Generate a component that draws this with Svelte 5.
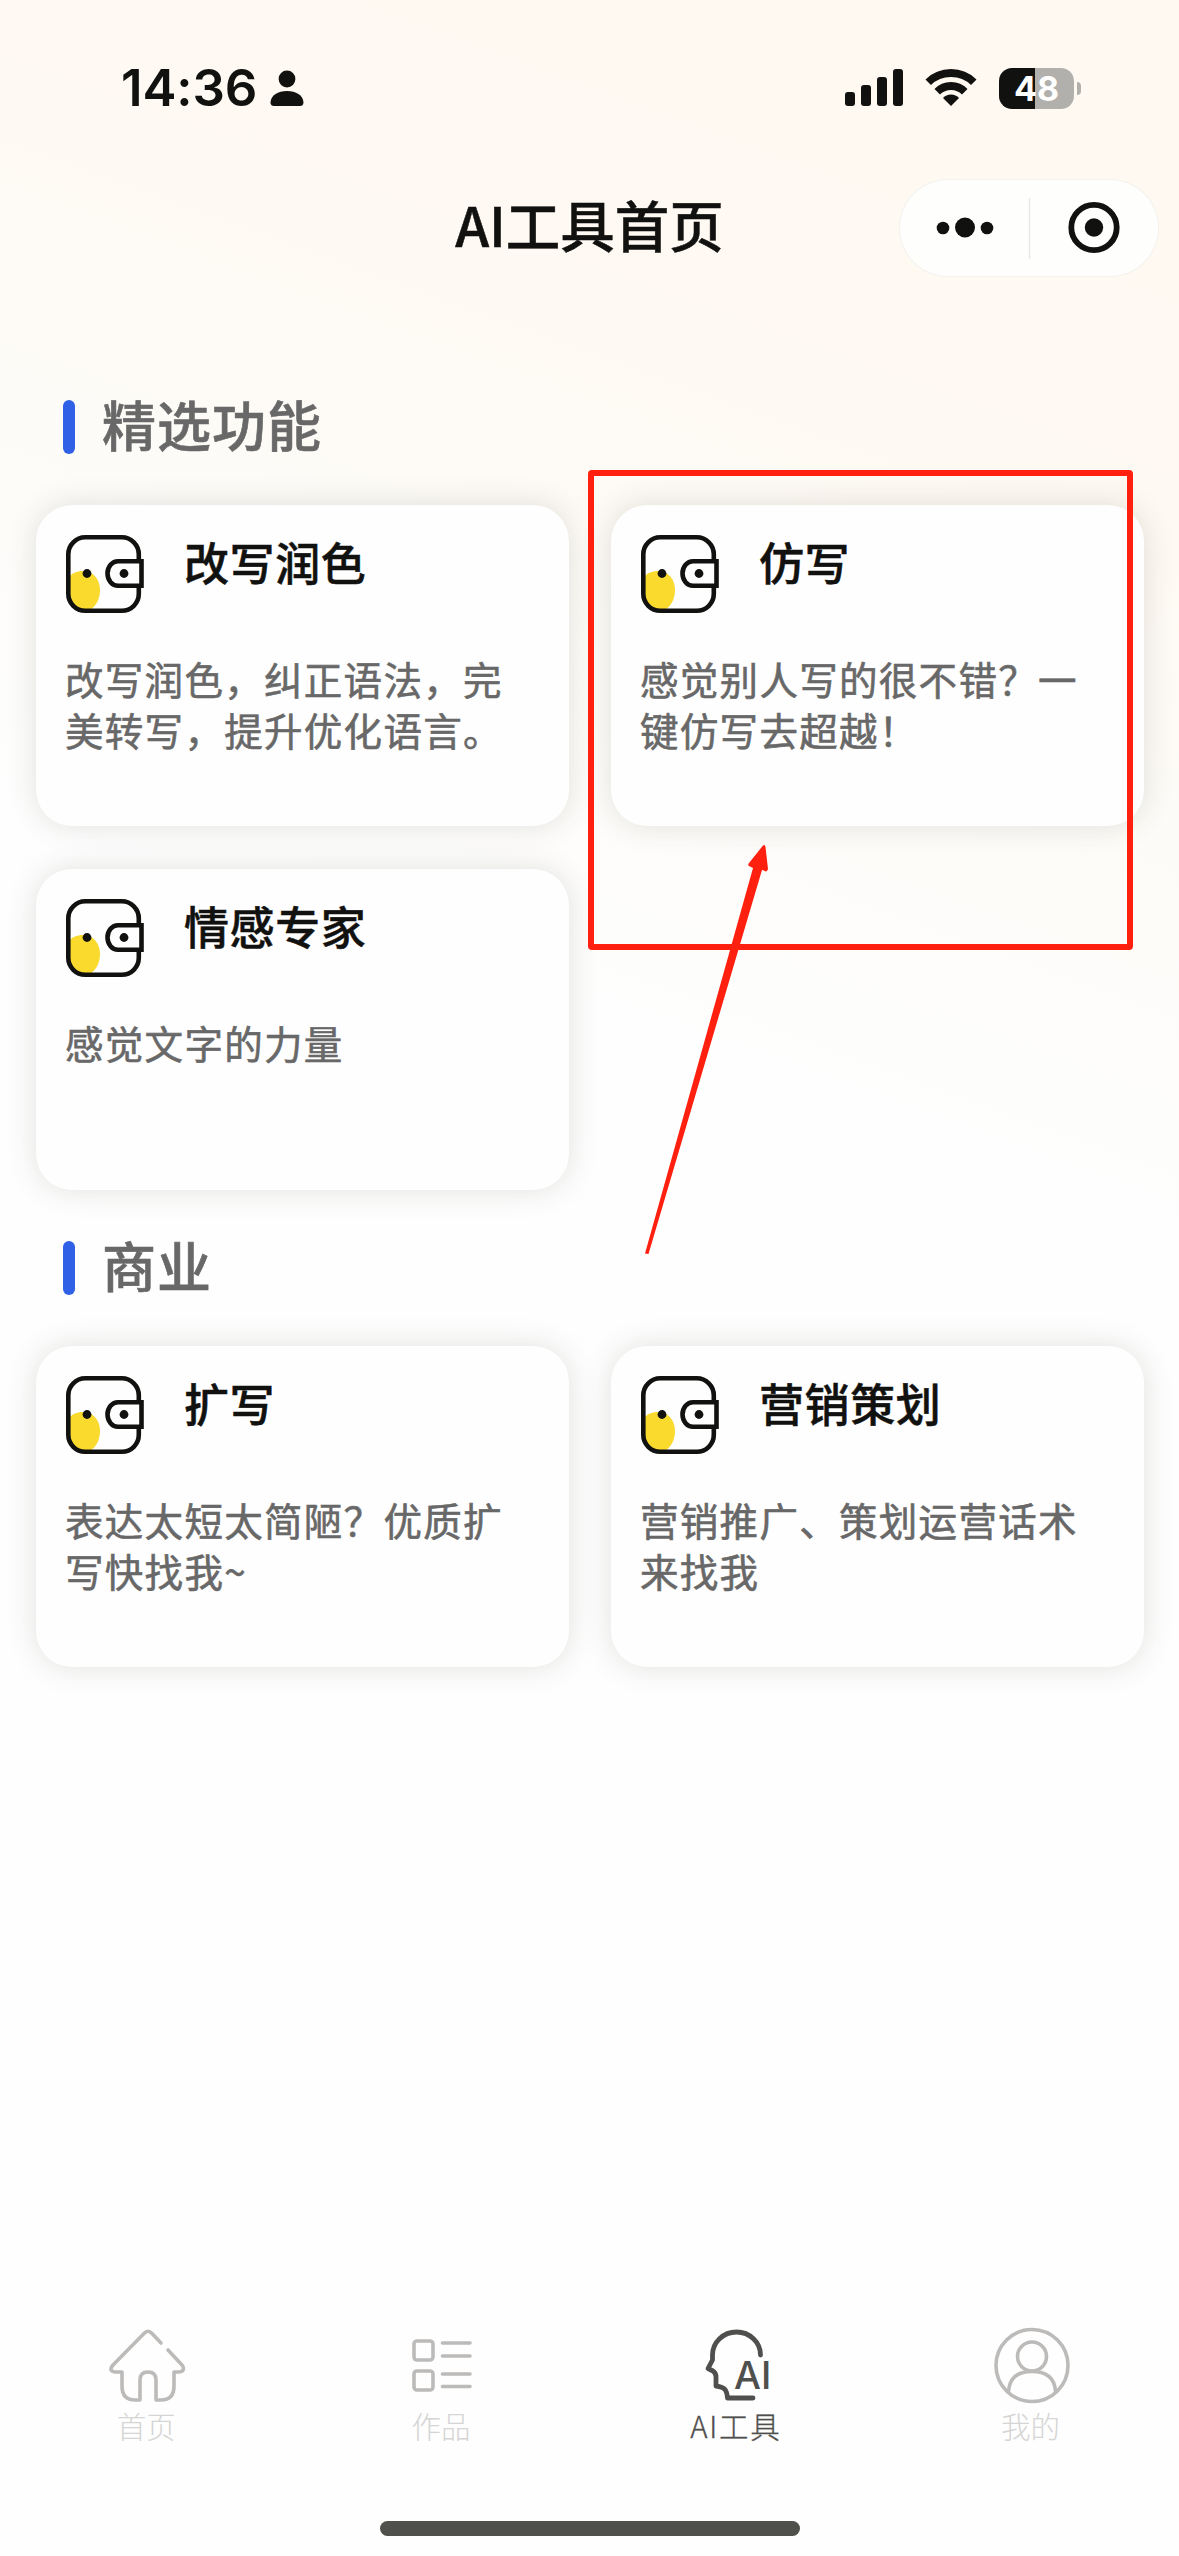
<script lang="ts">
  type Card = { title: string; lines: string[] };
  type Section = { name: string; cards: Card[] };

  const sections: Section[] = [
    {
      name: '精选功能',
      cards: [
        { title: '改写润色', lines: ['改写润色，纠正语法，完', '美转写，提升优化语言。'] },
        { title: '仿写', lines: ['感觉别人写的很不错？一', '键仿写去超越！'] },
        { title: '情感专家', lines: ['感觉文字的力量'] }
      ]
    },
    {
      name: '商业',
      cards: [
        { title: '扩写', lines: ['表达太短太简陋？优质扩', '写快找我~'] },
        { title: '营销策划', lines: ['营销推广、策划运营话术', '来找我'] }
      ]
    }
  ];

  const tabs = [
    { id: 'home', label: '首页' },
    { id: 'works', label: '作品' },
    { id: 'ai', label: 'AI工具' },
    { id: 'me', label: '我的' }
  ];
  const active = 'ai';
</script>

<div class="page">
  <header class="status">
    <div class="clock">
      <span class="time">14:36</span>
      <svg class="person" width="34" height="37" viewBox="0 0 34 37">
        <circle cx="17" cy="9" r="8.4" />
        <path d="M0.5 32.500C1 25 8 21 17 21s16 4 16.500 11.500Q33.300 36 30 36H4Q0.700 36 0.500 32.500Z" />
      </svg>
    </div>
    <div class="indicators">
      <svg width="58" height="38" viewBox="0 0 58 38">
        <rect x="0" y="23" width="10" height="14" rx="3" />
        <rect x="16" y="16" width="10" height="21" rx="3" />
        <rect x="32" y="8" width="10" height="29" rx="3" />
        <rect x="48" y="0" width="10" height="37" rx="3" />
      </svg>
      <svg class="wifi" width="52" height="38" viewBox="0 0 52 38">
        <path d="M0.500 10.500Q11 0 26 0T51.500 10.500L46 16Q38 8 26 8T6 16Z" />
        <path d="M9.500 20Q16 13 26 13T42.500 20L37 25.500Q32.500 21 26 21T15 25.500Z" />
        <path d="M18 29Q21 25.500 26 25.500T34 29L26 37Z" />
      </svg>
      <div class="battery"><span>48</span></div>
      <i class="cap"></i>
    </div>
  </header>

  <nav class="titlebar">
    <h1>AI工具首页</h1>
    <div class="capsule">
      <svg width="258" height="96" viewBox="0 0 258 96">
        <circle cx="43" cy="48" r="6.300" />
        <circle cx="65" cy="47.500" r="10" />
        <circle cx="87" cy="48" r="6.300" />
        <path class="divider" d="M129.500 18V79" />
        <circle class="ring" cx="194" cy="47.500" r="22.700" />
        <circle cx="194" cy="47.500" r="9.200" />
      </svg>
    </div>
  </nav>

  <main>
    {#each sections as section}
      <section>
        <h2><span>{section.name}</span></h2>
        <div class="grid">
          {#each section.cards as card}
            <article>
              <div class="head">
                <svg class="wallet" width="80" height="80" viewBox="0 0 80 80">
                  <path class="yolk" d="M3 45C6 39 12 37 18 37C28 37 35 45 35 56C35 65 31 72 25 76H17Q4 73 3 59Z" />
                  <rect class="line" x="3.300" y="3.300" width="70.500" height="73.500" rx="17" />
                  <path class="flap" d="M76.500 27.300H53A10.500 12.200 0 0 0 53 51.700H76.500Z" />
                  <circle cx="22" cy="39.500" r="4.400" />
                  <circle cx="59" cy="39.500" r="4.400" />
                </svg>
                <h3>{card.title}</h3>
              </div>
              <p>{#each card.lines as line}<span>{line}</span>{/each}</p>
            </article>
          {/each}
        </div>
      </section>
    {/each}
  </main>

  <footer>
    <div class="tabs">
      {#each tabs as tab}
        <div class="tab" class:active={tab.id === active}>
          <svg width="80" height="80" viewBox="0 0 80 80">
            {#if tab.id === 'home'}
              <path d="M54 17L45 7.500Q41 3 37 7.500L6 39Q1 45 8 46H15V60Q15 74 28 74H33V54Q33 46 41 46T49 54V74H54Q67 74 67 60V46H72Q79 45 75 39L61 24" />
            {:else if tab.id === 'works'}
              <rect x="12" y="15" width="19" height="19" rx="3" />
              <rect x="12" y="45" width="19" height="19" rx="3" />
              <path d="M40.500 17H68M40.500 30H68M40.500 48H68M40.500 60.500H68" />
            {:else if tab.id === 'ai'}
              <path d="M63.500 29A24 23 0 0 0 15.500 29V34L11 42.500L16 45Q19 47 19 51V60Q26 61 28 63.500T30.500 72H56" />
              <text x="37 64" y="62.500">AI</text>
            {:else}
              <circle cx="40" cy="39.500" r="36" />
              <circle cx="40" cy="30.500" r="14.500" />
              <path d="M16.500 65Q18 45.500 40 45.500T63.500 65" />
            {/if}
          </svg>
          <span>{tab.label}</span>
        </div>
      {/each}
    </div>
    <div class="home-bar"></div>
  </footer>

  <svg class="annotation" width="1179" height="2556" viewBox="0 0 1179 2556">
    <rect x="591" y="473" width="539" height="474" rx="1" />
    <path d="M645 1253.500L753 868L749 866Q747.500 865 749 863L763 845.500Q765 844 765.500 847L768 869Q767 873 764 870.500L762 870L648.500 1254Z" />
  </svg>
</div>

<style>
  :global(body) {
    margin: 0;
  }
  .page {
    position: relative;
    box-sizing: border-box;
    width: 1179px;
    height: 2556px;
    overflow: hidden;
    display: flex;
    flex-direction: column;
    color: #111110;
    background: linear-gradient(200deg, #fff9f1 0%, #fef9f2 17%, #fdfcf9 30%, #fefefe 42%, #fefefe 100%);
    font-family: Inter, 'Noto Sans CJK SC', sans-serif;
  }
  svg {
    display: block;
    flex: none;
    fill: #111110;
  }
  h1, h2, h3, p {
    margin: 0;
  }
  .status {
    height: 176px;
    padding: 0 98px 0 121px;
    box-sizing: border-box;
    display: flex;
    justify-content: space-between;
    align-items: center;
  }
  .clock, .indicators {
    display: flex;
    align-items: center;
  }
  .time {
    font-size: 51px;
    font-weight: 600;
    line-height: 60px;
    width: 149px;
    letter-spacing: -0.1px;
    white-space: nowrap;
  }
  .wifi {
    margin: 0 22px;
  }
  .battery {
    width: 75px;
    height: 41px;
    border-radius: 13px;
    background: linear-gradient(90deg, #111110 48%, #b1b0ad 48%);
    color: #fff;
    font: 700 34px/41px Inter, sans-serif;
    text-align: center;
  }
  .cap {
    width: 4px;
    height: 13px;
    margin-left: 3px;
    border-radius: 0 4px 4px 0;
    background: #b1b0ad;
  }
  .titlebar {
    height: 104px;
    display: grid;
    grid-template-columns: 1fr auto 1fr;
    align-items: center;
  }
  h1 {
    grid-column: 2;
    padding-bottom: 9px;
    font: 500 54.5px/80px 'Noto Sans CJK SC', sans-serif;
    -webkit-text-stroke: 0.5px currentColor;
  }
  .capsule {
    justify-self: end;
    margin-right: 21px;
    width: 258px;
    height: 96px;
    border-radius: 48px;
    background: #fefefd;
    box-shadow: 0 0 0 1px #f3f2ed;
  }
  .divider {
    stroke: #ebe9e4;
    stroke-width: 1.5;
  }
  .ring {
    fill: none;
    stroke: #111110;
    stroke-width: 5.8;
  }
  main {
    flex: 1;
    padding: 120px 36px 0;
  }
  section + section {
    margin-top: 51px;
  }
  h2 {
    display: flex;
    align-items: center;
    height: 54px;
    margin: 0 0 51px 27px;
    color: #686868;
    font: 500 54px/54px 'Noto Sans CJK SC', sans-serif;
    letter-spacing: 1px;
    -webkit-text-stroke: 0.6px currentColor;
  }
  h2::before {
    content: '';
    width: 12px;
    height: 54px;
    margin-right: 27px;
    border-radius: 6px;
    background: #2f60e5;
  }
  h2 span {
    padding-bottom: 6px;
  }
  .grid {
    display: grid;
    grid-template-columns: 533px 533px;
    grid-auto-rows: 321px;
    column-gap: 42px;
    row-gap: 43px;
  }
  article {
    box-sizing: border-box;
    padding: 29px 29px 0;
    border-radius: 36px;
    background: #fefefe;
    box-shadow: 0 0 30px rgba(60, 60, 50, 0.15);
  }
  .head {
    display: flex;
    gap: 39px;
    height: 80px;
  }
  .wallet .yolk {
    fill: #f9da2d;
  }
  .wallet .line, .wallet .flap {
    fill: none;
    stroke: #111110;
    stroke-width: 4.6;
  }
  .wallet .flap {
    fill: #fefefe;
  }
  h3 {
    font: 500 45px/56px 'Noto Sans CJK SC', sans-serif;
    letter-spacing: 0.6px;
    -webkit-text-stroke: 0.5px currentColor;
  }
  p {
    padding-top: 39px;
    color: #686868;
    font: 400 38.500px/51px 'Noto Sans CJK SC', sans-serif;
    letter-spacing: 1.3px;
    -webkit-text-stroke: 0.6px currentColor;
  }
  p span {
    display: block;
    white-space: nowrap;
  }
  footer {
    height: 230px;
    display: flex;
    flex-direction: column;
    align-items: center;
  }
  .tabs {
    width: 100%;
    height: 195px;
    display: grid;
    grid-template-columns: repeat(4, 1fr);
  }
  .tab {
    display: flex;
    flex-direction: column;
    align-items: center;
    color: #d5d5d4;
    font: 300 29.500px/40px 'Noto Sans CJK SC', sans-serif;
  }
  .tab span {
    margin-top: -1px;
    padding-right: 2px;
  }
  .tab svg {
    fill: none;
    stroke: #bcbbb9;
    stroke-width: 3.6;
    stroke-linecap: round;
    stroke-linejoin: round;
  }
  .tab.active {
    color: #4f4f4d;
    letter-spacing: 1.7px;
    -webkit-text-stroke: 0.3px currentColor;
  }
  .tab.active svg {
    stroke: #4f4f4d;
    stroke-width: 4.8;
  }
  .tab text {
    fill: #4f4f4d;
    stroke: none;
    font: 500 38px Inter, sans-serif;
    letter-spacing: 0;
  }
  .home-bar {
    width: 420px;
    height: 15px;
    border-radius: 8px;
    background: #4f4f4c;
  }
  .annotation {
    position: absolute;
    left: 0;
    top: 0;
    fill: #ff200f;
  }
  .annotation rect {
    fill: none;
    stroke: #ff200f;
    stroke-width: 6;
  }
</style>
